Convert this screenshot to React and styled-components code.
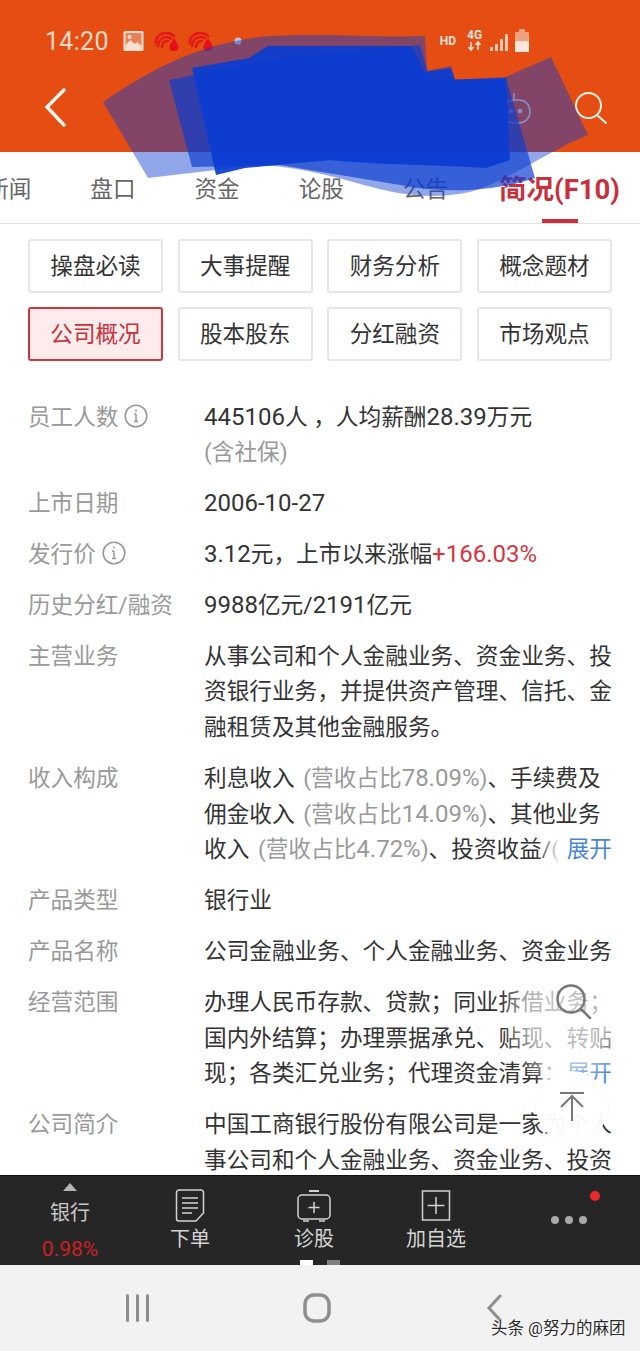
import React from "react";
import styled, { createGlobalStyle } from "styled-components";

const Global = createGlobalStyle`
  html, body { margin: 0; padding: 0; background: #fff; }
  body { font-family: Roboto, "Noto Sans CJK SC", sans-serif; }
`;
const Page = styled.div`
  position: relative; width: 640px; height: 1351px; overflow: hidden;
  display: flex; flex-direction: column; background: #fff;
`;
const Header = styled.header`
  height: 152px; flex: none; background: #e54d12; box-sizing: border-box;
  display: flex; flex-direction: column; color: #fbe3d8;
`;
const StatusBar = styled.div`
  display: flex; align-items: center; height: 30px; margin-top: 26px; padding: 0 110px 0 45px;
`;
const Clock = styled.span`font-size: 25px; color: #fbd9c8; letter-spacing: .3px; margin-right: 14px;`;
const StatusLeft = styled.div`display: flex; align-items: center; gap: 6px; flex: 1;`;
const StatusRight = styled.div`display: flex; align-items: center; gap: 5px;`;
const Hd = styled.span`font-size: 12px; font-weight: 700; color: #fbe3d8; margin-right: 6px;`;
const NavRow = styled.div`
  display: flex; align-items: center; justify-content: space-between;
  height: 60px; margin-top: 21px; padding: 0 32px 0 44px;
`;
const NavRight = styled.div`display: flex; align-items: center; gap: 42px; margin-top: 2px;`;
const Tabs = styled.nav`
  height: 72px; flex: none; box-sizing: border-box; border-bottom: 1px solid #e2e2e2;
  display: flex; justify-content: flex-end; align-items: center; gap: 59px;
  padding: 0 20px 0 0; overflow: hidden;
`;
const Tab = styled.div`
  position: relative; flex: none; font-size: 22.6px; white-space: nowrap; line-height: 32px; margin-top: 4px;
  color: ${p => (p.$active ? "#c9303c" : "#666")};
  font-weight: ${p => (p.$active ? 700 : 400)};
  ${p => p.$active && "font-size: 27.5px; margin-left: -8px;"}
  &::after {
    content: ""; display: ${p => (p.$active ? "block" : "none")};
    position: absolute; left: 43px; top: 45px; width: 36px; height: 4px; background: #c9303c;
  }
`;
const Content = styled.main`
  position: relative; flex: 1; min-height: 0; overflow: hidden; padding: 15px 28px 0;
`;
const Buttons = styled.div`
  display: grid; grid-template-columns: repeat(4, 135px); column-gap: 14.67px; row-gap: 14px; margin-bottom: 38.5px;
`;
const Btn = styled.div`
  height: 54px; box-sizing: border-box; border-radius: 3px; display: flex; align-items: center; justify-content: center;
  font-size: 22.6px; padding-bottom: 3px;
  border: ${p => (p.$active ? "2px solid #d0353f" : "2px solid #e6e6e6")};
  color: ${p => (p.$active ? "#c9303c" : "#333")};
  background: ${p => (p.$active ? "#fdeceb" : "#fff")};
`;
const Rows = styled.div`display: flex; flex-direction: column; gap: 15.2px;`;
const Row = styled.div`display: grid; grid-template-columns: 176px 408px; position: relative;`;
const Label = styled.div`
  font-size: 22.6px; line-height: 35.7px; color: #999; display: flex; align-items: flex-start; white-space: nowrap;
`;
const Info = styled.svg`width: 26px; height: 26px; margin: 3px 0 0 5px; flex: none;`;
const Value = styled.div`
  font-size: 22.67px; line-height: 35.7px; color: #333; height: ${p => p.$h || "auto"}; overflow: hidden;
`;
const Num = styled.span`font-size: 24px; line-height: 1;`;
const Muted = styled.span`color: #999;`;
const Share = styled(Muted)`margin-left: 3px;`;
const Up = styled.span`color: #d8353f;`;
const Line = styled.div`white-space: nowrap; overflow: hidden; height: 35.7px;`;
const More = styled.span`
  position: absolute; right: 0; bottom: 0; line-height: 35.7px; font-size: 22.67px; color: #4a86d8;
  padding-left: 30px; background: linear-gradient(to right, rgba(255,255,255,0), #fff 24px);
`;
const FloatFade = styled.div`
  position: absolute; left: 500px; top: 755px; width: 112px; height: 110px;
  background: radial-gradient(ellipse at 60% 32%, rgba(255,255,255,.75) 0, rgba(255,255,255,.62) 42%, rgba(255,255,255,0) 72%);
`;
const FloatSearch = styled.svg`position: absolute; left: 553px; top: 758px; width: 40px; height: 40px;`;
const TopBtn = styled.div`
  position: absolute; left: 536px; top: 847px; width: 72px; height: 72px; border-radius: 50%;
  background: rgba(255,255,255,.96); box-shadow: 0 0 3px rgba(0,0,0,.05);
  display: flex; align-items: center; justify-content: center;
`;
const BottomBar = styled.div`
  position: relative; height: 90px; flex: none; background: #262626; border-top: 1px solid #111; box-sizing: border-box;
  display: grid; grid-template-columns: 140px 100px 148px 96px 1fr; color: #d8d8d8;
`;
const Sector = styled.div`display: flex; flex-direction: column; align-items: center;`;
const SectorArrow = styled.div`
  width: 0; height: 0; margin-top: 7px; border-left: 7px solid transparent; border-right: 7px solid transparent;
  border-bottom: 8px solid #b5b5b5;
`;
const SectorName = styled.div`font-size: 20px; line-height: 26px; margin-top: 9px; color: #c8c8c8;`;
const SectorPct = styled.div`font-size: 21px; line-height: 26px; margin-top: 10px; color: #cf1f24;`;
const BarItem = styled.div`
  display: flex; flex-direction: column; align-items: center; justify-content: flex-start; padding-top: 13px;
`;
const IconBox = styled.svg`width: 36px; height: 34px; flex: none;`;
const BarLabel = styled.div`font-size: 20px; line-height: 28px; margin-top: 2px; white-space: nowrap; color: #d4d4d4;`;
const MoreCell = styled.div`
  position: relative; display: flex; justify-content: center; padding: 40px 0 0 14px; gap: 6px;
`;
const Dot = styled.i`width: 8px; height: 8px; border-radius: 50%; background: #a8a8a8; display: block;`;
const RedDot = styled.i`
  position: absolute; width: 10px; height: 10px; border-radius: 50%; background: #ea2a2a; left: 106px; top: 15px;
`;
const Pager = styled.div`position: absolute; left: 300px; bottom: 0; display: flex; gap: 14px;`;
const PagerMark = styled.i`width: 13px; height: 5px; display: block; background: ${p => (p.$on ? "#fff" : "#808080")};`;
const SysNav = styled.div`
  position: relative; height: 86px; flex: none; background: #f2f2f2; display: grid;
  grid-template-columns: 277px 80px 1fr; align-items: center;
`;
const SysCell = styled.div`display: flex; justify-content: ${p => p.$j || "center"}; padding-right: ${p => p.$pr || 0}px;`;
const Watermark = styled.div`
  position: absolute; left: 491px; top: 54px; font-size: 16.5px; line-height: 20px; color: #2a2a2a; white-space: nowrap;
  text-shadow: 0 0 2px #fff, 0 0 2px #fff;
`;
const Scribble = styled.svg`position: absolute; left: 0; top: 0; width: 640px; height: 240px; pointer-events: none;`;

const InfoIcon = () => (
  <Info viewBox="0 0 26 26" fill="none" stroke="#999" strokeWidth="1.6">
    <circle cx="13" cy="13" r="10.8" />
    <path d="M13 11v7.500M11 11h2M11 18.500h4" strokeWidth="1.5" />
    <circle cx="13" cy="7.6" r="1" fill="#999" stroke="none" />
  </Info>
);
const Shell = () => (
  <svg width="28" height="20" viewBox="0 0 28 20" fill="none" stroke="#e3181a" strokeLinecap="round">
    <path d="M3 12C2 7 7 2 13 2c3 0 6 1 8 3" strokeWidth="2.5" />
    <path d="M5 15C5 10 9 6 14 6c2 0 3 .5 4 1.500" strokeWidth="2.5" />
    <path d="M9 16c0-3 2-6 6-6" strokeWidth="2.5" />
    <path d="M21 7c1.500 3.500 4.500 6 4.500 9a4.500 4.500 0 0 1-9 0c0-3 3-5.500 4.500-9z" fill="#e3101a" stroke="none" />
  </svg>
);

export default function App() {
  return (
    <Page>
      <Global />
      <Header>
        <StatusBar>
          <Clock>14:20</Clock>
          <StatusLeft>
            <svg width="21" height="20" viewBox="0 0 20 20" style={{ marginRight: 3 }}>
              <rect width="20" height="20" rx="1.500" fill="#fbe0d2" />
              <rect x="2" y="2" width="16" height="16" fill="#e9825a" />
              <path d="M2 18v-4l5-5 4 4 3-2 4 4v3z" fill="#fbe0d2" />
              <circle cx="6" cy="6" r="2" fill="#fbe0d2" />
            </svg>
            <Shell />
            <Shell />
            <svg width="20" height="10" viewBox="0 0 20 10" style={{ marginLeft: 12 }}>
              <circle cx="5" cy="5" r="3.500" fill="#c9c3d8" />
            </svg>
          </StatusLeft>
          <StatusRight>
            <Hd>HD</Hd>
            <svg width="42" height="24" viewBox="0 0 42 24" fill="#fbe3d8">
              <text x="0" y="10" fontSize="12" fontWeight="700" fontFamily="Roboto, sans-serif">4G</text>
              <path d="M4 13v7M1.500 18 4 21l2.500-3M11 21v-7M8.500 16 11 13l2.500 3" stroke="#fbe3d8" strokeWidth="1.500" fill="none" />
              <path d="M23 18h3v4h-3zM28 15h3v7h-3zM33 10h3v12h-3zM38 5h3v17h-3z" fill="#f6c7ae" />
            </svg>
            <svg width="16" height="24" viewBox="0 0 16 24">
              <rect x="5" y="0" width="6" height="3" fill="#f0a27e" />
              <rect x="1" y="3" width="14" height="20" rx="1.500" fill="#f0a27e" />
              <rect x="1" y="12" width="14" height="11" rx="1" fill="#fde6da" />
            </svg>
          </StatusRight>
        </StatusBar>
        <NavRow>
          <svg width="24" height="40" viewBox="0 0 24 40" fill="none" stroke="#fff3ea" strokeWidth="3.500" strokeLinecap="round">
            <path d="M20 3 3 20l17 18" />
          </svg>
          <NavRight>
            <svg width="32" height="34" viewBox="0 0 32 34" fill="none" stroke="#f2d3c6" strokeWidth="1.600">
              <path d="M14 2v6" />
              <rect x="3" y="9" width="27" height="23" rx="11" />
              <circle cx="11" cy="20" r="1.500" fill="#f2d3c6" />
              <circle cx="20" cy="20" r="1.500" fill="#f2d3c6" />
            </svg>
            <svg width="34" height="34" viewBox="0 0 34 34" fill="none" stroke="#fff3e2" strokeWidth="2">
              <circle cx="14.500" cy="14.500" r="12.500" />
              <path d="m23 24 9 8" strokeLinecap="round" />
            </svg>
          </NavRight>
        </NavRow>
      </Header>
      <Tabs>
        <Tab>新闻</Tab>
        <Tab>盘口</Tab>
        <Tab>资金</Tab>
        <Tab>论股</Tab>
        <Tab>公告</Tab>
        <Tab $active>简况(F10)</Tab>
      </Tabs>
      <Content>
        <Buttons>
          {["操盘必读", "大事提醒", "财务分析", "概念题材", "公司概况", "股本股东", "分红融资", "市场观点"].map(t => (
            <Btn key={t} $active={t === "公司概况"}>{t}</Btn>
          ))}
        </Buttons>
        <Rows>
          <Row>
            <Label>员工人数<InfoIcon /></Label>
            <Value><Num>445106</Num>人 ，人均薪酬<Num>28.39</Num>万元<br /><Muted>(含社保)</Muted></Value>
          </Row>
          <Row><Label>上市日期</Label><Value><Num>2006-10-27</Num></Value></Row>
          <Row>
            <Label>发行价<InfoIcon /></Label>
            <Value><Num>3.12</Num>元，上市以来涨幅<Up><Num>+166.03%</Num></Up></Value>
          </Row>
          <Row><Label>历史分红/融资</Label><Value><Num>9988</Num>亿元/<Num>2191</Num>亿元</Value></Row>
          <Row>
            <Label>主营业务</Label>
            <Value>从事公司和个人金融业务、资金业务、投资银行业务，并提供资产管理、信托、金融租赁及其他金融服务。</Value>
          </Row>
          <Row>
            <Label>收入构成</Label>
            <Value $h="107px">
              <Line>利息收入 <Share>(营收占比<Num>78.09%</Num>)</Share>、手续费及</Line>
              <Line>佣金收入 <Share>(营收占比<Num>14.09%</Num>)</Share>、其他业务</Line>
              <Line>收入 <Share>(营收占比<Num>4.72%</Num>)</Share>、投资收益/(</Line>
              <More>展开</More>
            </Value>
          </Row>
          <Row><Label>产品类型</Label><Value>银行业</Value></Row>
          <Row><Label>产品名称</Label><Value>公司金融业务、个人金融业务、资金业务</Value></Row>
          <Row>
            <Label>经营范围</Label>
            <Value $h="107px">
              <Line>办理人民币存款、贷款；同业拆借业务；</Line>
              <Line>国内外结算；办理票据承兑、贴现、转贴</Line>
              <Line>现；各类汇兑业务；代理资金清算：</Line>
              <More>展开</More>
            </Value>
          </Row>
          <Row>
            <Label>公司简介</Label>
            <Value>中国工商银行股份有限公司是一家为个人事公司和个人金融业务、资金业务、投资</Value>
          </Row>
        </Rows>
        <FloatFade />
        <FloatSearch viewBox="0 0 40 40" fill="none" stroke="#777" strokeWidth="2.500">
          <circle cx="18" cy="17" r="13.500" />
          <path d="m28 27 9 9" strokeLinecap="round" />
        </FloatSearch>
        <TopBtn>
          <svg width="26" height="30" viewBox="0 0 26 30" fill="none" stroke="#777" strokeWidth="2">
            <path d="M1 1h24M13 29V4M2 15 13 4l11 11" />
          </svg>
        </TopBtn>
      </Content>
      <BottomBar>
        <Sector>
          <SectorArrow />
          <SectorName>银行</SectorName>
          <SectorPct>0.98%</SectorPct>
        </Sector>
        <BarItem>
          <IconBox viewBox="0 0 36 34" fill="none" stroke="#d4d4d4" strokeWidth="1.500">
            <path d="M7 1h22a2.500 2.500 0 0 1 2.500 2.500V24L24 32H7a2.500 2.500 0 0 1-2.500-2.500v-26A2.500 2.500 0 0 1 7 1z" />
            <path d="M10 9h16M10 14h16M10 19h16M10 24h10" />
          </IconBox>
          <BarLabel>下单</BarLabel>
        </BarItem>
        <BarItem>
          <IconBox viewBox="0 0 36 34" fill="none" stroke="#d4d4d4" strokeWidth="1.500">
            <path d="M13 2h10" strokeWidth="2" />
            <rect x="2" y="6" width="32" height="24" rx="4" />
            <path d="M18 13v11M12.500 18.500h11M7 32h6M23 32h6" />
          </IconBox>
          <BarLabel>诊股</BarLabel>
        </BarItem>
        <BarItem>
          <IconBox viewBox="0 0 36 34" fill="none" stroke="#d4d4d4" strokeWidth="1.500">
            <rect x="4.500" y="2" width="27" height="29" />
            <path d="M18 8v17M9.500 16.500h17" />
          </IconBox>
          <BarLabel>加自选</BarLabel>
        </BarItem>
        <MoreCell>
          <Dot /><Dot /><Dot />
          <RedDot />
        </MoreCell>
        <Pager><PagerMark $on /><PagerMark /></Pager>
      </BottomBar>
      <SysNav>
        <SysCell $j="flex-end" $pr={126}>
          <svg width="26" height="28" viewBox="0 0 26 28" fill="#8e8e8e">
            <rect x="1" y="0" width="3" height="28" rx="1.500" />
            <rect x="11" y="0" width="3" height="28" rx="1.500" />
            <rect x="21" y="0" width="3" height="28" rx="1.500" />
          </svg>
        </SysCell>
        <SysCell>
          <svg width="30" height="30" viewBox="0 0 30 30" fill="none" stroke="#8e8e8e" strokeWidth="3.500">
            <rect x="3" y="2" width="24" height="26" rx="9" />
          </svg>
        </SysCell>
        <SysCell $j="flex-start">
          <svg width="18" height="28" viewBox="0 0 18 28" fill="none" stroke="#8e8e8e" strokeWidth="3" strokeLinecap="round" style={{ marginLeft: 129 }}>
            <path d="M14 2 3 14l11 12" />
          </svg>
        </SysCell>
        <Watermark>头条 @努力的麻团</Watermark>
      </SysNav>
      <Scribble viewBox="0 0 640 240">
        <path d="M103 102C150 70 200 42 270 36C330 33 380 38 425 36L427 71L451 66L455 80L506 77L551 57L588 135C550 150 510 180 470 192C430 200 400 195 360 184C320 172 280 165 255 165L216 170L148 178Z" fill="#0a3cd0" opacity=".45" />
        <path d="M169 80L270 60L420 45L430 80L506 78L535 178C500 190 450 195 400 185L280 165L192 167Z" fill="#0a3cd0" opacity=".68" />
        <path d="M192 68L249 58L268 46L412 46L424 72L451 68L455 80L506 78L510 160L486 168C440 165 380 165 330 160L245 168L216 175Z" fill="#0a3cd0" opacity=".92" />
      </Scribble>
    </Page>
  );
}
